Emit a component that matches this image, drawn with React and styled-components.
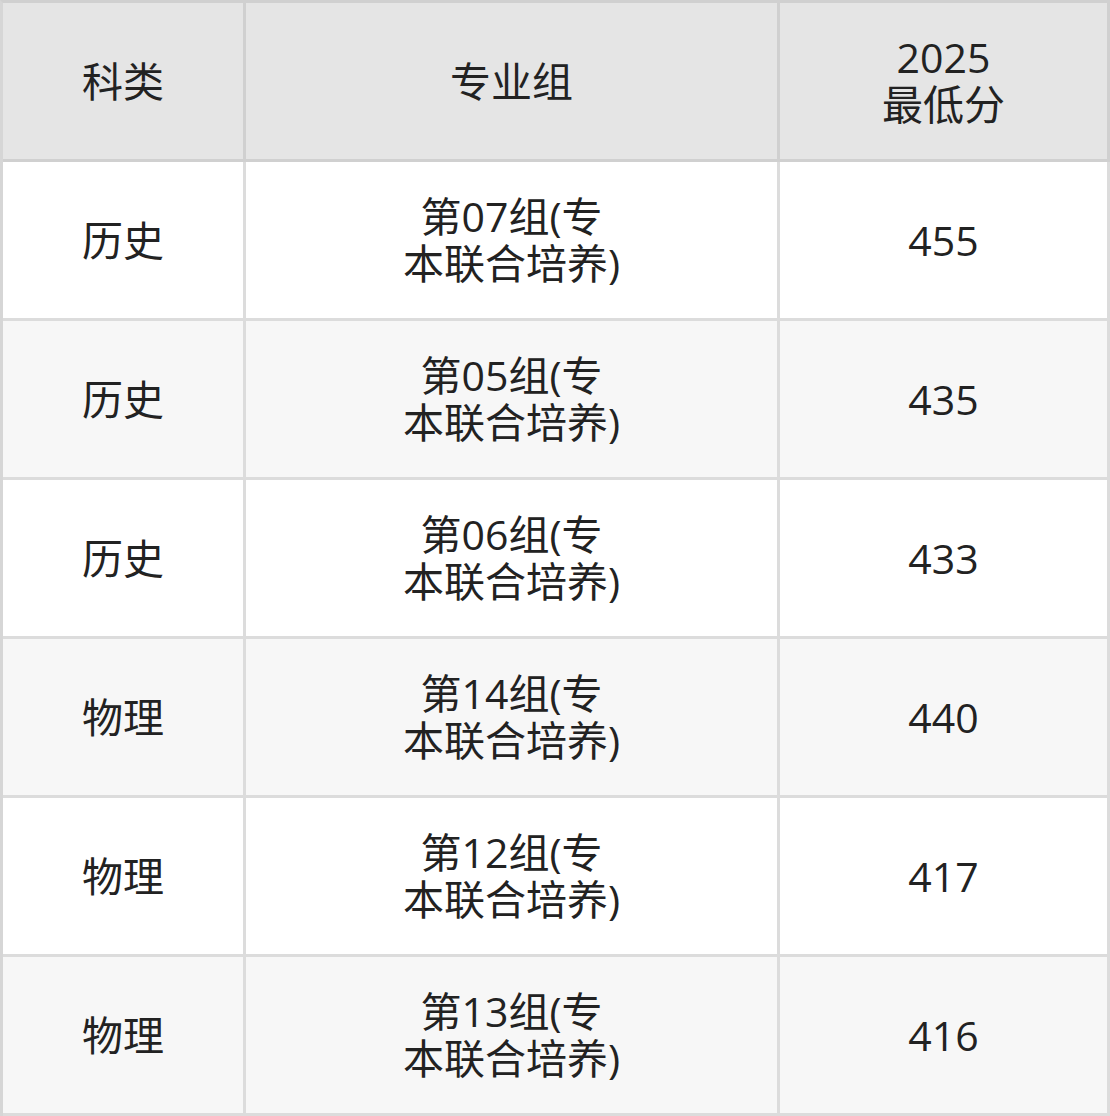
import React from 'react';
import styled, { createGlobalStyle } from 'styled-components';

const rows = [
  { kind: '历史', group: '07', score: 455 },
  { kind: '历史', group: '05', score: 435 },
  { kind: '历史', group: '06', score: 433 },
  { kind: '物理', group: '14', score: 440 },
  { kind: '物理', group: '12', score: 417 },
  { kind: '物理', group: '13', score: 416 },
];

const App = () => {
  return (
    <>
      <GlobalStyle />
      <Table>
        <colgroup>
          <col style={{ width: 243 }} />
          <col style={{ width: 534 }} />
          <col style={{ width: 330 }} />
        </colgroup>
        <thead>
          <tr>
            <HeadCell>科类</HeadCell>
            <HeadCell>专业组</HeadCell>
            <HeadCell>
              2025
              <br />
              最低分
            </HeadCell>
          </tr>
        </thead>
        <tbody>
          {rows.map((r, i) => (
            <Row key={r.group} $alt={i % 2 === 1}>
              <Cell>{r.kind}</Cell>
              <Cell>
                第{r.group}组(专
                <br />
                本联合培养)
              </Cell>
              <Cell>{r.score}</Cell>
            </Row>
          ))}
        </tbody>
      </Table>
    </>
  );
};

export default App;

const GlobalStyle = createGlobalStyle`
  body {
    margin: 0;
    background: #ffffff;
    font-family: "Open Sans", "Noto Sans CJK SC", sans-serif;
  }
`;

const Table = styled.table`
  width: 1110px;
  border-spacing: 0;
  border-collapse: separate;
  table-layout: fixed;
  border-top: 3px solid #d0d0d0;
  border-left: 3px solid #d6d6d6;
  color: #222222;
  font-size: 41px;
  line-height: 47px;
`;

const HeadCell = styled.th`
  height: 156px;
  padding: 0;
  background: #e5e5e5;
  border-right: 3px solid #d0d0d0;
  border-bottom: 3px solid #d0d0d0;
  font-weight: 400;
  text-align: center;
  vertical-align: middle;
`;

const Row = styled.tr`
  background: ${(p) => (p.$alt ? '#f7f7f7' : '#ffffff')};
`;

const Cell = styled.td`
  height: 156px;
  padding: 0;
  border-right: 3px solid #dcdcdc;
  border-bottom: 3px solid #dcdcdc;
  text-align: center;
  vertical-align: middle;
`;
